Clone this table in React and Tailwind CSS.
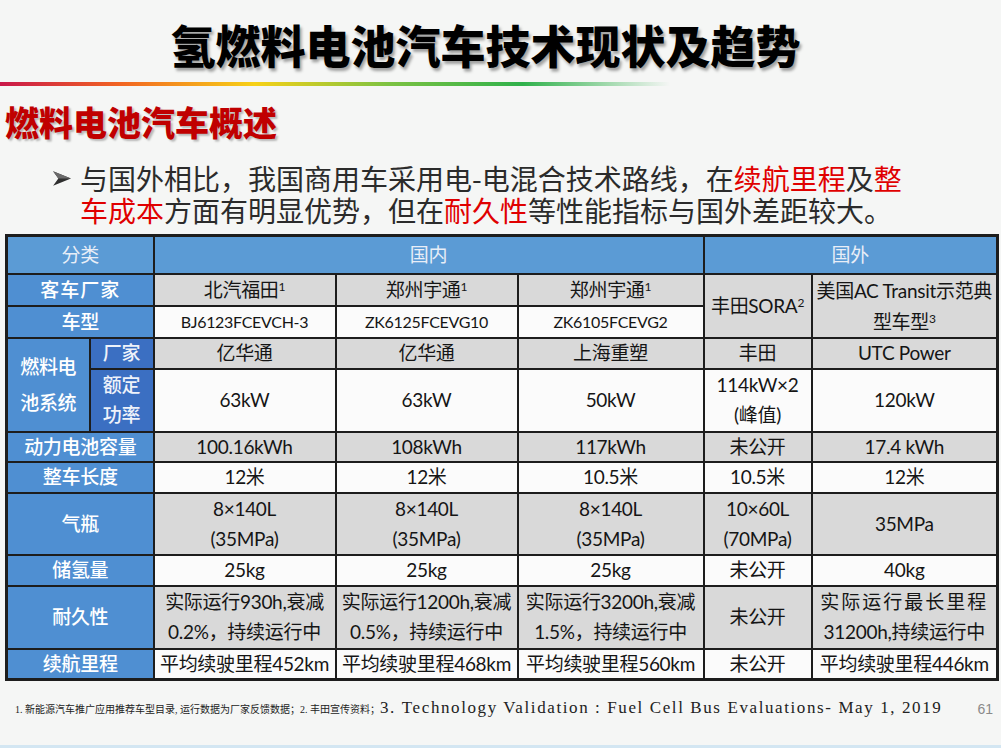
const B = "border-2 border-[#1d1d1d] text-center align-middle p-0";
const HEAD = `${B} bg-[#5b9bd5] text-[#e8eef7] font-normal`;
const LAB = `${B} bg-[#4f8fd2] text-white font-medium`;
const SUB = `${B} bg-[#3b6fc2] text-[#eef2fa] font-medium`;
const G = `${B} bg-[#d9d9d9] text-[#151515]`;
const W = `${B} bg-[#fbfbfb] text-[#151515]`;

function Arrow() {
  return (
    <svg width="21" height="21" viewBox="0 0 20 20" className="shrink-0">
      <polygon points="2,3 19,10 2,17 7,10" fill="#2f2f2f" />
      <polygon points="2,3 19,10 7,10" fill="#6a6a6a" />
    </svg>
  );
}

function Two({ a, b }) {
  return (
    <div className="leading-[30px] whitespace-nowrap">
      {a}
      <br />
      {b}
    </div>
  );
}

export default function App() {
  return (
    <div className="w-[1001px] h-[748px] overflow-hidden flex flex-col bg-[#f5f6f5] font-['Noto_Sans_CJK_SC',sans-serif]">
      {/* title */}
      <div className="h-[82px] flex items-center justify-center pr-[30px] pt-[6px]">
        <h1 className="text-[45px] font-black text-black leading-none [text-shadow:2px_3px_3px_rgba(0,0,0,0.35)]">
          氢燃料电池汽车技术现状及趋势
        </h1>
      </div>
      <div className="h-[4px] w-[670px] bg-[linear-gradient(90deg,#c9184a_0%,#f26522_18%,#f7d117_38%,#7cc242_58%,#2fb14b_78%,rgba(60,180,80,0)_100%)]" />

      {/* section heading */}
      <div className="h-[64px] pt-[14px] pl-[5px]">
        <h2 className="text-[34px] leading-[44px] font-black text-[#c00000] [text-shadow:2px_2px_2px_rgba(0,0,0,0.25)]">
          燃料电池汽车概述
        </h2>
      </div>

      {/* bullet */}
      <div className="flex items-start gap-[8px] pl-[51px] pt-[12px] h-[84px]">
        <div className="pt-[6px]">
          <Arrow />
        </div>
        <div className="text-[28px] leading-[32px] text-[#2b2b2b] whitespace-nowrap">
          <div>
            与国外相比，我国商用车采用电-电混合技术路线，在
            <span className="text-[#e00000]">续航里程</span>及
            <span className="text-[#e00000]">整</span>
          </div>
          <div>
            <span className="text-[#e00000]">车成本</span>方面有明显优势，但在
            <span className="text-[#e00000]">耐久性</span>等性能指标与国外差距较大。
          </div>
        </div>
      </div>

      {/* table */}
      <table className="ml-[5px] w-[991px] table-fixed border-collapse border-[3px] border-[#1d1d1d] text-[19px] leading-tight tracking-[-0.3px] font-['Lato','Noto_Sans_CJK_SC',sans-serif]">
        <colgroup>
          <col className="w-[83px]" />
          <col className="w-[64px]" />
          <col className="w-[182px]" />
          <col className="w-[182px]" />
          <col className="w-[186px]" />
          <col className="w-[108px]" />
          <col className="w-[186px]" />
        </colgroup>
        <tbody>
          <tr className="h-[38px]">
            <th colSpan={2} className={HEAD}>分类</th>
            <th colSpan={3} className={HEAD}>国内</th>
            <th colSpan={2} className={HEAD}>国外</th>
          </tr>
          <tr className="h-[31px]">
            <td colSpan={2} className={`${LAB} tracking-[1px]`}>客车厂家</td>
            <td className={G}>北汽福田<sup className="text-[12px]">1</sup></td>
            <td className={G}>郑州宇通<sup className="text-[12px]">1</sup></td>
            <td className={G}>郑州宇通<sup className="text-[12px]">1</sup></td>
            <td rowSpan={2} className={G}>丰田SORA<sup className="text-[12px]">2</sup></td>
            <td rowSpan={2} className={G}>
              <div className="leading-[31px] whitespace-nowrap">
                美国AC Transit示范典
                <br />
                型车型<sup className="text-[12px]">3</sup>
              </div>
            </td>
          </tr>
          <tr className="h-[31px]">
            <td colSpan={2} className={LAB}>车型</td>
            <td className={`${W} text-[16px]`}>BJ6123FCEVCH-3</td>
            <td className={`${W} text-[16px]`}>ZK6125FCEVG10</td>
            <td className={`${W} text-[16px]`}>ZK6105FCEVG2</td>
          </tr>
          <tr className="h-[31px]">
            <td rowSpan={2} className={`${LAB} leading-[36px]`}>
              燃料电
              <br />
              池系统
            </td>
            <td className={SUB}>厂家</td>
            <td className={G}>亿华通</td>
            <td className={G}>亿华通</td>
            <td className={G}>上海重塑</td>
            <td className={G}>丰田</td>
            <td className={G}>UTC Power</td>
          </tr>
          <tr className="h-[63px]">
            <td className={`${SUB} leading-[30px]`}>
              额定
              <br />
              功率
            </td>
            <td className={W}>63kW</td>
            <td className={W}>63kW</td>
            <td className={W}>50kW</td>
            <td className={W}>
              <Two a="114kW×2" b="(峰值)" />
            </td>
            <td className={W}>120kW</td>
          </tr>
          <tr className="h-[30px]">
            <td colSpan={2} className={LAB}>动力电池容量</td>
            <td className={G}>100.16kWh</td>
            <td className={G}>108kWh</td>
            <td className={G}>117kWh</td>
            <td className={G}>未公开</td>
            <td className={G}>17.4 kWh</td>
          </tr>
          <tr className="h-[31px]">
            <td colSpan={2} className={LAB}>整车长度</td>
            <td className={W}>12米</td>
            <td className={W}>12米</td>
            <td className={W}>10.5米</td>
            <td className={W}>10.5米</td>
            <td className={W}>12米</td>
          </tr>
          <tr className="h-[62px]">
            <td colSpan={2} className={LAB}>气瓶</td>
            <td className={G}><Two a="8×140L" b="(35MPa)" /></td>
            <td className={G}><Two a="8×140L" b="(35MPa)" /></td>
            <td className={G}><Two a="8×140L" b="(35MPa)" /></td>
            <td className={G}><Two a="10×60L" b="(70MPa)" /></td>
            <td className={G}>35MPa</td>
          </tr>
          <tr className="h-[31px]">
            <td colSpan={2} className={LAB}>储氢量</td>
            <td className={W}>25kg</td>
            <td className={W}>25kg</td>
            <td className={W}>25kg</td>
            <td className={W}>未公开</td>
            <td className={W}>40kg</td>
          </tr>
          <tr className="h-[63px]">
            <td colSpan={2} className={LAB}>耐久性</td>
            <td className={G}><Two a="实际运行930h,衰减" b="0.2%，持续运行中" /></td>
            <td className={G}><Two a="实际运行1200h,衰减" b="0.5%，持续运行中" /></td>
            <td className={G}><Two a="实际运行3200h,衰减" b="1.5%，持续运行中" /></td>
            <td className={G}>未公开</td>
            <td className={G}>
              <div className="leading-[30px] whitespace-nowrap">
                <span className="tracking-[2px]">实际运行最长里程</span>
                <br />
                31200h,持续运行中
              </div>
            </td>
          </tr>
          <tr className="h-[31px]">
            <td colSpan={2} className={LAB}>续航里程</td>
            <td className={`${W} whitespace-nowrap`}>平均续驶里程452km</td>
            <td className={`${W} whitespace-nowrap`}>平均续驶里程468km</td>
            <td className={`${W} whitespace-nowrap`}>平均续驶里程560km</td>
            <td className={W}>未公开</td>
            <td className={`${W} whitespace-nowrap`}>平均续驶里程446km</td>
          </tr>
        </tbody>
      </table>

      {/* footnote */}
      <div className="mt-auto flex items-end justify-between pl-[15px] pr-[8px] pb-[29px]">
        <p className="whitespace-nowrap text-[#222] font-['Liberation_Serif','Noto_Sans_CJK_SC',serif] leading-none">
          <span className="text-[10px]">1. 新能源汽车推广应用推荐车型目录, 运行数据为厂家反馈数据；2. 丰田宣传资料；</span>
          <span className="text-[17px] tracking-[1.6px]">3. Technology Validation : Fuel Cell Bus Evaluations- May 1, 2019</span>
        </p>
        <span className="text-[14px] text-[#8a8a8a] leading-none font-['Liberation_Sans',sans-serif]">61</span>
      </div>
      <div className="h-[3px] bg-[#d3e6f2]" />
    </div>
  );
}
